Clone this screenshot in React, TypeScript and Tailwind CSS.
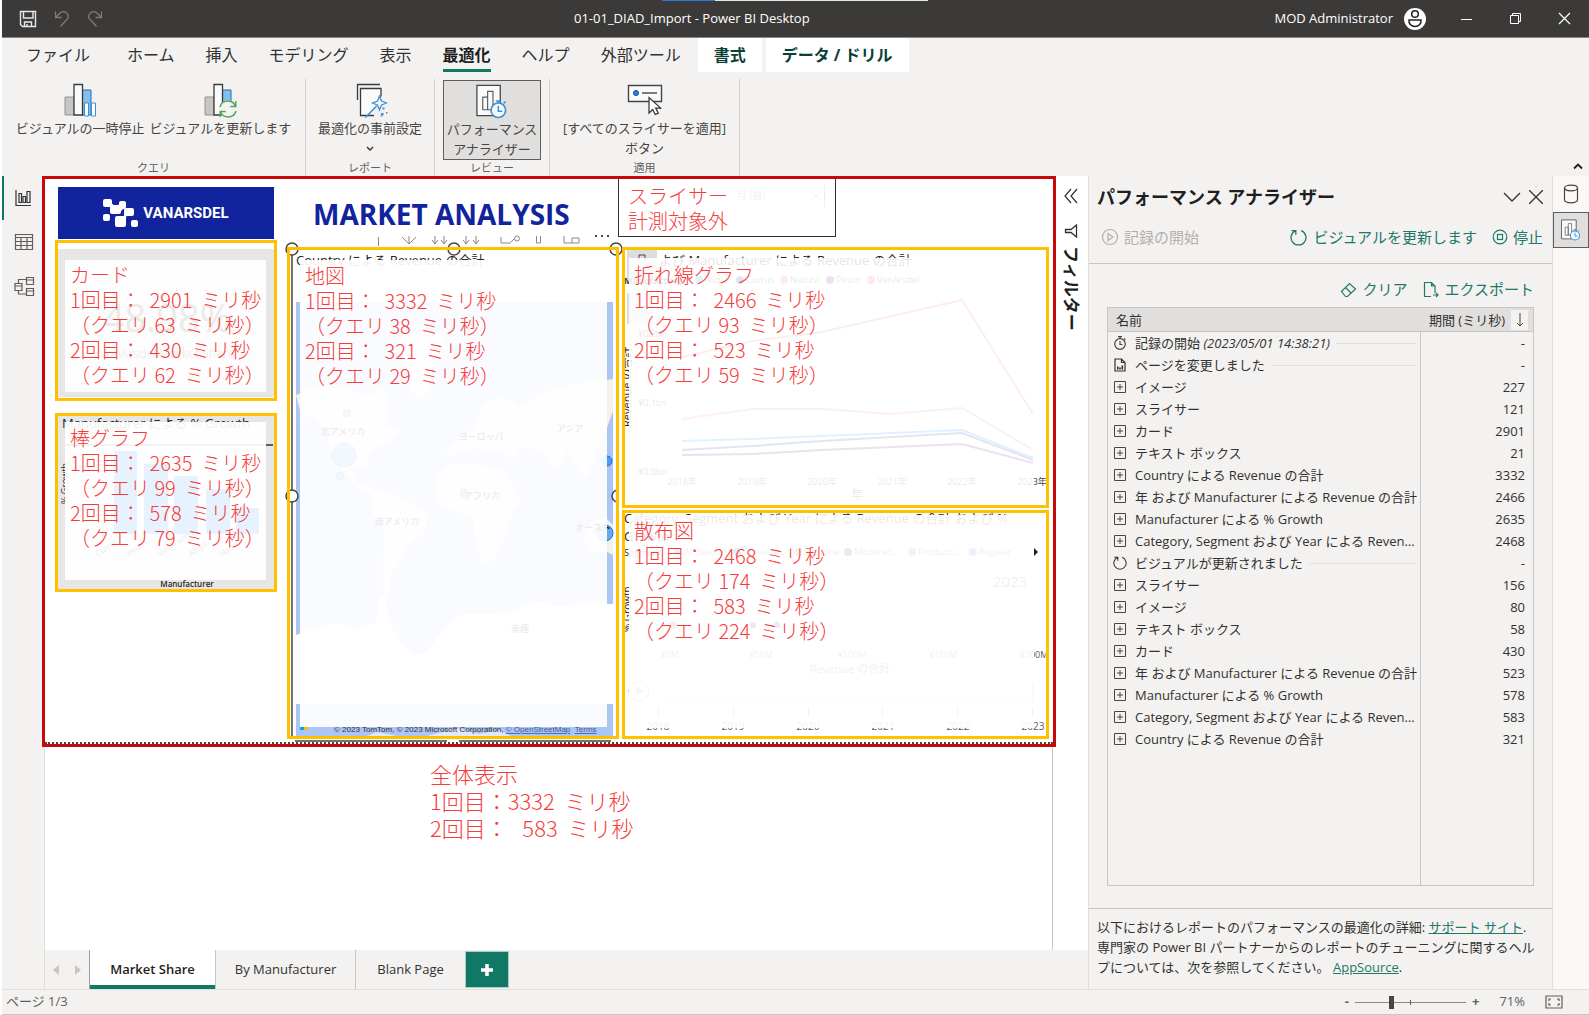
import { useState } from 'react';
import type { ReactNode } from 'react';

type Row = { name: string; stamp?: string; ms: string; kind: 'visual' | 'start' | 'page' | 'refresh' };

const ROWS: Row[] = [
  { name: '記録の開始', stamp: '(2023/05/01 14:38:21)', ms: '-', kind: 'start' },
  { name: 'ページを変更しました', ms: '-', kind: 'page' },
  { name: 'イメージ', ms: '227', kind: 'visual' },
  { name: 'スライサー', ms: '121', kind: 'visual' },
  { name: 'カード', ms: '2901', kind: 'visual' },
  { name: 'テキスト ボックス', ms: '21', kind: 'visual' },
  { name: 'Country による Revenue の合計', ms: '3332', kind: 'visual' },
  { name: '年 および Manufacturer による Revenue の合計', ms: '2466', kind: 'visual' },
  { name: 'Manufacturer による % Growth', ms: '2635', kind: 'visual' },
  { name: 'Category, Segment および Year による Revenue の合計', ms: '2468', kind: 'visual' },
  { name: 'ビジュアルが更新されました', ms: '-', kind: 'refresh' },
  { name: 'スライサー', ms: '156', kind: 'visual' },
  { name: 'イメージ', ms: '80', kind: 'visual' },
  { name: 'テキスト ボックス', ms: '58', kind: 'visual' },
  { name: 'カード', ms: '430', kind: 'visual' },
  { name: '年 および Manufacturer による Revenue の合計', ms: '523', kind: 'visual' },
  { name: 'Manufacturer による % Growth', ms: '578', kind: 'visual' },
  { name: 'Category, Segment および Year による Revenue の合計', ms: '583', kind: 'visual' },
  { name: 'Country による Revenue の合計', ms: '321', kind: 'visual' },
];

const MENU = ['ファイル', 'ホーム', '挿入', 'モデリング', '表示', '最適化', 'ヘルプ', '外部ツール'];
const YEARS = ['2018', '2019', '2020', '2021', '2022', '2023'];

export default function App() {
  return (
    <div className="flex min-h-screen flex-col bg-white pl-0.5 font-['Open_Sans','Noto_Sans_CJK_JP',sans-serif] text-[#323130]">
      <TitleBar />
      <MenuTabs />
      <Ribbon />
      <div className="flex flex-1">
        <ViewNav />
        <div className="flex min-w-0 flex-1 flex-col">
          <div className="flex flex-1">
            <main className="min-w-0 flex-1 bg-white">
              <Report />
              <p className="mt-[13px] ml-[385px] text-[22px] leading-[27px] font-light text-[#f53b3b] font-['Noto_Sans_CJK_JP',sans-serif]">
                全体表示
                <br />
                1回目：3332&nbsp; ミリ秒
                <br />
                2回目：&nbsp;&nbsp; 583&nbsp; ミリ秒
              </p>
            </main>
            <FilterPane />
          </div>
          <PageTabs />
        </div>
        <AnalyzerPane />
        <RightStrip />
      </div>
      <StatusBar />
    </div>
  );
}

function TitleBar() {
  return (
    <header className="relative flex h-[38px] items-center border-b border-[#8a8886] bg-[#3b3a39] text-white">
      <div className="flex w-[572px] items-center gap-[15px] pl-4">
        <button aria-label="保存">
          <svg width="20" height="20" viewBox="0 0 20 20" fill="none" stroke="#e8e8e8" strokeWidth="1.4">
            <path d="M2.5 2.5h15v15h-13l-2-2zM5.5 2.5v6.5h9.5v-6.5M6.5 17.5v-4.5h7v4.5M9 17.5v-2.5" />
          </svg>
        </button>
        <button aria-label="元に戻す">
          <svg width="18" height="18" viewBox="0 0 18 18" fill="none" stroke="#7d7c7b" strokeWidth="1.3">
            <path d="M2.5 1.5v6h6M2.7 7.3L7 3c2.5-2 5.5-1.5 7 .3 1.7 2 1.5 4.7-.3 6.5L7.5 16.5" />
          </svg>
        </button>
        <button aria-label="やり直し">
          <svg width="18" height="18" viewBox="0 0 18 18" fill="none" stroke="#7d7c7b" strokeWidth="1.3">
            <path d="M15.5 1.5v6h-6M15.3 7.3L11 3C8.500 1 5.500 1.500 4 3.300c-1.700 2-1.500 4.700.3 6.500l6.200 6.700" />
          </svg>
        </button>
      </div>
      <div className="absolute top-0 left-[660px] flex h-px w-[266px]">
        <span className="w-[53px] bg-[#2b7cd3]" />
        <span className="flex-1 bg-[#e1e6e1]" />
      </div>
      <span className="flex-1 text-[13px]">01-01_DIAD_Import - Power BI Desktop</span>
      <div className="flex items-center justify-end pr-[18px]">
        <span className="text-[13px]">MOD Administrator</span>
        <svg className="ml-[11px]" width="22" height="22" viewBox="0 0 22 22">
          <circle cx="11" cy="11" r="11" fill="#fff" />
          <circle cx="11" cy="6" r="3.3" fill="none" stroke="#222" strokeWidth="1.5" />
          <path d="M5 12h12c.5 3.5-2 6.5-6 6.5S4.5 15.5 5 12z" fill="none" stroke="#222" strokeWidth="1.5" />
        </svg>
        <button aria-label="最小化" className="ml-[34px]">
          <svg width="13" height="13" viewBox="0 0 13 13" stroke="#fff"><path d="M1 7.5h11" /></svg>
        </button>
        <button aria-label="元のサイズに戻す" className="ml-9">
          <svg width="13" height="13" viewBox="0 0 13 13" fill="none" stroke="#fff">
            <path d="M1.5 3.5h8v8h-8zM3.5 3.5v-2h8v8h-2" />
          </svg>
        </button>
        <button aria-label="閉じる" className="ml-9">
          <svg width="13" height="13" viewBox="0 0 13 13" stroke="#fff" strokeWidth="1.2"><path d="M1 1l11 11M12 1L1 12" /></svg>
        </button>
      </div>
    </header>
  );
}

function MenuTabs() {
  return (
    <nav className="flex h-[34px] items-stretch bg-[#f3f2f1] pl-2 text-[16px] leading-[34px]">
      {MENU.map((m) => (
        <button key={m} className={m === 'ファイル' ? 'mr-1.5 pr-[15px] pl-4' : m === '最適化' ? 'pr-[15px] pl-4 font-bold text-[#201f1e]' : 'pr-[15px] pl-4'}>
          <span className={m === '最適化' ? 'block h-[34px] border-b-[3px] border-[#117865]' : 'block h-[34px]'}>{m}</span>
        </button>
      ))}
      <button className="ml-0.5 bg-white px-4 font-bold text-[#0b3f37]">書式</button>
      <button className="ml-1 bg-white px-4 font-bold text-[#0b3f37]">データ / ドリル</button>
    </nav>
  );
}

function BarsIcon({ children }: { children: ReactNode }) {
  return (
    <svg width="36" height="36" viewBox="0 0 36 36" fill="none">
      <path d="M3 14h9v18H3z" fill="#c8c6c4" stroke="#979593" />
      <path d="M20 7h9v25h-9z" fill="#83beec" stroke="#1e6fc0" />
      <path d="M12 1.5h8.5V32H12z" fill="#fafafa" stroke="#3b3a39" strokeWidth="1.3" />
      {children}
    </svg>
  );
}

function RefreshArrows() {
  return (
    <g stroke="#4ba35c" strokeWidth="1.4">
      <circle cx="26" cy="26" r="9" fill="#f3f2f1" stroke="none" />
      <path d="M18 24c1-4 4-6 8-6 3.5 0 6 2 7.5 5M33.8 18v5.5h-5.5M34 28c-1 4-4 6-8 6-3.5 0-6-2-7.5-5M18.2 34v-5.5h5.5" />
    </g>
  );
}

function AnalyzerIcon({ size }: { size: number }) {
  return (
    <svg width={size} height={size} viewBox="0 0 36 36" fill="none">
      <path d="M2.5 1.5h24v31h-24z" fill="#fafafa" stroke="#484644" strokeWidth="1.3" />
      <path d="M8.5 13.5h5v13h-5zM13.5 7.5h5.5v19h-5.5z" stroke="#605e5c" strokeWidth="1.2" />
      <circle cx="24.5" cy="27" r="7.5" fill="#f3f9fd" stroke="#3f8fd2" strokeWidth="1.7" />
      <path d="M24.5 22.5V28h4M22 17.5h5M24.5 17.5v2M30 20l2-2" stroke="#3f8fd2" strokeWidth="1.5" />
    </svg>
  );
}

function Ribbon() {
  return (
    <section className="relative flex h-[104px] bg-[#f3f2f1] pt-[7px] text-[13px] leading-5 text-[#484644]">
      <Group label="クエリ" className="w-[304px]">
        <div className="flex justify-center gap-[5px]">
          <RibbonButton icon={<BarsIcon><path d="M22.5 20h4v13h-4zM29.5 20h4v13h-4z" fill="#fff" stroke="#3f8fd2" /></BarsIcon>}>
            ビジュアルの一時停止
          </RibbonButton>
          <RibbonButton icon={<BarsIcon><RefreshArrows /></BarsIcon>}>ビジュアルを更新します</RibbonButton>
        </div>
      </Group>
      <Group label="レポート" className="w-[129px]">
        <RibbonButton
          icon={
            <svg width="36" height="36" viewBox="0 0 36 36" fill="none" stroke="#3b3a39" strokeWidth="1.3">
              <path d="M5.5 17V1.5H28" />
              <path d="M8.5 5.5H29V32.5H8.5z" fill="#fafafa" />
              <path d="M22 21l9-9 4 10-7 12h-6z" fill="#f3f2f1" stroke="none" />
              <path d="M27.5 13l2 5 5 2-5 2-2 5-2-5-5-2 5-2z" fill="#f3f9fd" stroke="#3f8fd2" />
              <path d="M13.5 34.5l11-11.5" stroke="#3f8fd2" strokeWidth="1.6" />
              <path d="M30.5 24.5h2v2h-2zM29 30h2.5v2.5H29zM34 29h1.500v1.500H34z" fill="#3f8fd2" stroke="none" />
            </svg>
          }
        >
          最適化の事前設定
          <svg className="mx-auto mt-2" width="8" height="6" viewBox="0 0 8 6" fill="none" stroke="#323130" strokeWidth="1.4">
            <path d="M1 1l3 3 3-3" />
          </svg>
        </RibbonButton>
      </Group>
      <Group label="レビュー" className="w-[115px]">
        <button className="mx-auto mt-px flex h-20 w-[98px] flex-col items-center border border-[#605e5c] bg-[#e1dfdd] pt-[3px]">
          <AnalyzerIcon size={36} />
          <span className="whitespace-nowrap">
            パフォーマンス
            <br />
            アナライザー
          </span>
        </button>
      </Group>
      <Group label="適用" className="w-[190px]">
        <RibbonButton
          icon={
            <svg width="36" height="36" viewBox="0 0 36 36" fill="none">
              <path d="M1.5 2.5h33v16h-33z" fill="#fafafa" stroke="#484644" strokeWidth="1.4" />
              <circle cx="9" cy="10" r="2.6" fill="#2b7cd3" stroke="#1a5ea8" />
              <path d="M15 10h15" stroke="#484644" strokeWidth="1.4" />
              <path d="M22 14.5V30l3.7-3.5 2.6 5 3-1.4-2.6-5h5z" fill="#fafafa" stroke="#323130" strokeWidth="1.2" />
            </svg>
          }
        >
          [すべてのスライサーを適用]
          <br />
          ボタン
        </RibbonButton>
      </Group>
      <button aria-label="リボンを折りたたむ" className="absolute right-1.5 bottom-1.5">
        <svg width="10" height="8" viewBox="0 0 10 8" fill="none" stroke="#201f1e" strokeWidth="1.8"><path d="M1 6.5l4-4 4 4" /></svg>
      </button>
    </section>
  );
}

function Group({ label, className, children }: { label: string; className: string; children: ReactNode }) {
  return (
    <div className={`flex flex-col justify-between border-r border-[#d2d0ce] ${className}`}>
      {children}
      <span className="text-center text-[11px] leading-4 text-[#605e5c]">{label}</span>
    </div>
  );
}

function RibbonButton({ icon, children }: { icon: ReactNode; children: ReactNode }) {
  return (
    <button className="flex flex-col items-center pt-1 whitespace-nowrap">
      {icon}
      <span className="-mt-px">{children}</span>
    </button>
  );
}

function ViewNav() {
  return (
    <nav className="flex w-[43px] flex-col border-r border-[#e1dfdd] bg-[#f3f2f1] text-[#605e5c]">
      <button aria-label="レポート ビュー" className="flex h-11 items-center border-l-2 border-[#117865] pl-2.5">
        <svg width="18" height="18" viewBox="0 0 18 18" fill="none" stroke="#323130" strokeWidth="1.2">
          <path d="M2 1v15.5h15M5 4.5h2.5v9H5zM9 7.5h2.5v6H9zM13 2.5h3v11h-3z" />
        </svg>
      </button>
      <button aria-label="データ ビュー" className="flex h-11 items-center pl-3">
        <svg width="20" height="18" viewBox="0 0 20 18" fill="none" stroke="currentColor" strokeWidth="1.2">
          <path d="M1.5 1.5h17v15h-17zM1.5 4.5h17M1.5 8.5h17M1.5 12.5h17M7 4.5v12M13 4.5v12" />
        </svg>
      </button>
      <button aria-label="モデル ビュー" className="flex h-11 items-center pl-3">
        <svg width="21" height="21" viewBox="0 0 21 21" fill="none" stroke="currentColor" strokeWidth="1.2">
          <path d="M12.5 1.5h7v7h-7zM12.5 4h7M12.5 12.5h7v7h-7zM12.5 15h7M1 7.5h7v7H1zM1 10h7M4.5 7.5v-4h8M4.5 14.5v3.5h8" />
        </svg>
      </button>
    </nav>
  );
}

function Report() {
  return (
    <section className="relative z-10 -mr-1 -ml-[3px] flex h-[571px] border-[3px] border-[#c8090c] bg-white pr-1 pl-2.5">
      <div className="absolute inset-x-0 bottom-0 border-b-2 border-dotted border-[#484644]" />
      <div className="flex w-[222px] shrink-0 flex-col">
        <div className="mx-[3px] mt-2 mb-px flex h-[52px] items-center justify-center gap-1 bg-[#12239e] text-white">
          <svg width="36" height="30" viewBox="0 0 36 30" fill="#fff">
            <rect x="0" y="1" width="9" height="8" rx="2" />
            <rect x="7" y="7" width="11" height="9" rx="2" />
            <rect x="16" y="3" width="7" height="8" rx="2" />
            <rect x="0" y="16" width="7" height="7" rx="2" />
            <rect x="21" y="10" width="10" height="8" rx="2" />
            <rect x="12" y="18" width="11" height="11" rx="2" />
            <rect x="28" y="22" width="7" height="7" rx="2" />
            <path d="M7 6l3 0 1 3h-4zM15 7l3-2 3 5-3 3zM21 16l3 0-1 4h-2z" />
          </svg>
          <span className="text-[15px] font-bold font-['Roboto',sans-serif]">VANARSDEL</span>
        </div>
        <Note className="h-[161px]" pad="pt-[19px] pl-3" title="カード" first="2901" q1="63" second="430" q2="62">
          <CardArt />
        </Note>
        <Note className="mt-3 h-[179px]" pad="pt-[9px] pl-3" title="棒グラフ" first="2635" q1="99" second="578" q2="79">
          <BarArt />
        </Note>
      </div>
      <div className="ml-2.5 flex w-[332px] shrink-0 flex-col">
        <h1 className="mt-[15px] pl-[26px] text-[28px] leading-10 font-bold text-[#12239e]">MARKET ANALYSIS</h1>
        <svg className="mb-px ml-[88px]" width="240" height="12" viewBox="0 0 240 12" fill="none" stroke="#8a8886">
          <path d="M3.5 3v9M27 3l7 7 7-7M34 2v8M57 6l3 4 3-4M60 2v8M66 6l3 4 3-4M69 2v8M88 6l3 4 3-4M91 2v8M98 6l3 4 3-4M101 2v8M126 3v6h10M136 8l4-4M161.5 2v7h4v-7M189 2v7h15v-5h-7v5" />
          <circle cx="142" cy="4.5" r="2.5" />
          <path d="M220 2h2M226 2h2M232 2h2" stroke="#484644" strokeWidth="2" />
        </svg>
        <Note className="h-[492px]" pad="pt-[13px] pl-[15px]" title="地図" first="3332" q1="38" second="321" q2="29">
          <MapArt />
        </Note>
      </div>
      <div className="ml-[3px] flex min-w-0 flex-1 flex-col">
        <div className="relative -ml-1 h-[58px] w-[218px] border border-t-0 border-[#323130] pt-1 pl-[9px] text-[20px] leading-[25px] font-light text-[#f53b3b] font-['Noto_Sans_CJK_JP',sans-serif]">
          スライサー
          <br />
          計測対象外
          <svg className="absolute top-1.5 right-2" width="90" height="26" viewBox="0 0 90 26" fill="none" stroke="#ededed">
            <text x="0" y="14" fontSize="10" fill="#ededed" stroke="none">月 (暦)</text>
            <path d="M76 8l3 4 3-4M87.5 0v22" />
          </svg>
        </div>
        <Note className="mt-2.5 h-[261px]" pad="pt-3 pl-[9px]" title="折れ線グラフ" first="2466" q1="93" second="523" q2="59">
          <LineArt />
        </Note>
        <Note className="mt-0.5 h-[229px]" pad="pt-[5px] pl-[9px]" title="散布図" first="2468" q1="174" second="583" q2="224">
          <ScatterArt />
        </Note>
      </div>
    </section>
  );
}

type NoteProps = {
  className: string;
  pad: string;
  title: string;
  first: string;
  q1: string;
  second: string;
  q2: string;
  children: ReactNode;
};

function Note({ className, pad, title, first, q1, second, q2, children }: NoteProps) {
  return (
    <div className={`relative ${className}`}>
      {children}
      <p className={`relative h-full border-[3px] border-[#ffc000] text-[20px] leading-[25px] font-light whitespace-nowrap text-[#f53b3b] font-['Noto_Sans_CJK_JP',sans-serif] ${pad}`}>
        {title}
        <br />
        1回目：&nbsp; {first}&nbsp; ミリ秒
        <br />
        （クエリ {q1}&nbsp; ミリ秒）
        <br />
        2回目：&nbsp; {second}&nbsp; ミリ秒
        <br />
        （クエリ {q2}&nbsp; ミリ秒）
      </p>
    </div>
  );
}

function CardArt() {
  return (
    <svg className="absolute top-0 left-0" width="222" height="161" viewBox="0 0 222 161" textAnchor="middle">
      <rect x="3" y="9" width="217" height="148" fill="#e6e6e6" />
      <rect x="10" y="20" width="201" height="132" fill="#fdfdfd" />
      <text x="112" y="92" fontSize="38" fill="#ebebeb">48.98%</text>
      <text x="112" y="118" fontSize="12" fill="#f0f0f0">VanArsdel Market Share</text>
    </svg>
  );
}

function BarArt() {
  return (
    <svg className="absolute top-0 left-0" width="222" height="179" viewBox="0 0 222 179">
      <rect x="2" y="2" width="218" height="175" fill="#e6e6e6" />
      <text x="7" y="15" fontSize="13" fill="#252423">Manufacturer による % Growth</text>
      <path d="M10 32h208" stroke="#605e5c" strokeWidth="2" />
      <text transform="translate(13 91) rotate(-90)" fontSize="9" fill="#252423">% Growth</text>
      <rect x="10" y="9" width="201" height="158" fill="#fff" fillOpacity=".93" />
      <path d="M59 38h23v83h-23zM89 51h24v70h-24zM119 63h24v58h-24zM151 76h24v45h-24zM181 95h23v26h-23z" fill="#e6f2fd" />
      {['Currus', 'Pirum', 'VanArsdel', 'Aliqui', 'Natura'].map((n, i) => (
        <text key={n} transform={`translate(${43 + i * 31} ${144}) rotate(-35)`} fontSize="8" fill="#ececec">{n}</text>
      ))}
      <text x="132" y="174" fontSize="8" fontWeight="600" textAnchor="middle" fill="#252423">Manufacturer</text>
    </svg>
  );
}

function MapArt() {
  return (
    <svg className="absolute top-0 left-0 overflow-visible" width="332" height="492" viewBox="0 0 332 492">
      <path d="M5 6v486M8 494h152M172 494h152" stroke="#484644" strokeWidth="1.5" />
      <g fill="#fff" stroke="#484644" strokeWidth="1.5">
        <circle cx="5" cy="2" r="6" />
        <circle cx="167" cy="2" r="6" />
        <circle cx="329" cy="2" r="6" />
      </g>
      <text x="9" y="18" fontSize="13" fill="#252423">Country による Revenue の合計</text>
      <rect x="9" y="55" width="317" height="434" fill="#abc5f5" />
      <g fill="#f4f1ea">
        <path d="M9 148l22-8 30 3 22 6 12-10 8 20-6 18 16 6-10 10-16 10-10 16-6 2-8-2 6 16 10 2 12 8-6 2-16-8-14-16-12-24-6-20-12-10-10 3z" />
        <path d="M112 92l20-8 22 4 6 12-10 14-4 22-12 18-10-10-4-22-10-16z" />
        <path d="M84 243l16 0 22 12 20 12-6 20-16 12-8 18-8 8-2 22-6-2 0-34 2-26-12-16z" />
        <path d="M158 210l8-14 22-16 8-24 20-6 18 12 20-16 30-8 42-6v32l-10 28-8 16-8 24-12-14-8-14-12 20-10-16-20-10-12 14-16-8-24-2z" />
        <path d="M150 230l14-13 26 0 30 8 12 24 2 6-14 20-4 22-10 16-10 4-8-22-2-22-14-8-18-4-6-14z" />
        <path d="M296 290l8-14 14-6 8 8v30l-8-4-14 2z" />
      </g>
      <path d="M9 388l12-4 28-8 20 6 20-6 4-26 6-4 2 26 12 24 14 12 12-2 16-22 16-16 48-2 20-8 16-4 14 6 25-4L326 357V457H9z" fill="#fff" />
      <g fill="#2b88f0" fillOpacity=".7" stroke="#1a6fd6">
        <circle cx="57" cy="208" r="12" />
        <circle cx="60" cy="166" r="4" />
        <circle cx="53" cy="229" r="4" />
        <circle cx="177" cy="246" r="4" />
        <circle cx="318" cy="286" r="8" />
        <circle cx="320" cy="214" r="5" />
      </g>
      <g fontSize="9" fontWeight="600" fill="#101010" textAnchor="middle">
        <text x="56" y="188">北アメリカ</text>
        <text x="194" y="193">ヨーロッパ</text>
        <text x="283" y="185">アジア</text>
        <text x="195" y="252">アフリカ</text>
        <text x="110" y="278">南アメリカ</text>
        <text x="306" y="284">オースト</text>
        <text x="233" y="385">南極</text>
      </g>
      <path d="M140 489l30-8 22 6 20-4 12 6zM80 489l10-4 20 4z" fill="#dfe8fa" />
      <path d="M13 480h4v3h-4z" fill="#00a4ef" />
      <path d="M17 480h4v3h-4z" fill="#ffb900" />
      <text x="47" y="485" fontSize="8" fill="#323130" fontFamily="Liberation Sans">
        © 2023 TomTom, © 2023 Microsoft Corporation, <tspan fill="#3b5a92" textDecoration="underline">© OpenStreetMap</tspan> &#160;
        <tspan fill="#3b5a92" textDecoration="underline">Terms</tspan>
      </text>
      <rect x="13" y="13" width="307" height="467" fill="#fff" fillOpacity=".92" />
      <circle cx="5" cy="249" r="6" fill="#fff" stroke="#484644" strokeWidth="1.5" />
      <path d="M331 243a6 6 0 0 0 0 12" fill="#fff" stroke="#484644" strokeWidth="1.5" />
    </svg>
  );
}

const SERIES = [
  { color: '#e66c7d', points: '60,110 130,94 200,85 270,69 340,53 411,167' },
  { color: '#f08a5b', points: '60,172 130,162 200,162 270,167 340,161 411,203' },
  { color: '#118dff', points: '60,194 130,192 200,189 270,186 340,183 411,211' },
  { color: '#12239e', points: '60,203 130,199 200,194 270,190 340,186 411,213' },
  { color: '#6b007b', points: '60,208 130,207 200,203 270,200 340,197 411,216' },
];

const LINE_LEGEND = [
  { x: 77, name: 'Aliqui', color: '#118dff' },
  { x: 118, name: 'Currus', color: '#12239e' },
  { x: 162, name: 'Natura', color: '#e66c37' },
  { x: 208, name: 'Pirum', color: '#6b007b' },
  { x: 249, name: 'VanArsdel', color: '#e044a7' },
];

function LineArt() {
  return (
    <svg className="absolute top-0 left-0" width="427" height="261" viewBox="0 0 427 261" fontSize="9" fill="#484644">
      <rect x="5" y="3" width="30" height="34" fill="#dddddd" />
      <rect x="5" y="46" width="26" height="31" fill="#dddddd" />
      <text x="37" y="18" fontSize="13" fill="#252423">よび Manufacturer による Revenue の合計</text>
      <path d="M17 14v-6h6v6" fill="none" stroke="#484644" />
      <text x="2" y="37" fontWeight="700">Manufacturer</text>
      {LINE_LEGEND.map((l) => (
        <g key={l.name}>
          <circle cx={l.x} cy="33" r="4" fill={l.color} />
          <text x={l.x + 6} y="36">{l.name}</text>
        </g>
      ))}
      <text transform="translate(9 180) rotate(-90)" fontSize="11" fill="#252423">Revenue の合計</text>
      <text x="16" y="90">¥0.2bn</text>
      <text x="16" y="159">¥0.1bn</text>
      <text x="16" y="228">¥0.0bn</text>
      {SERIES.map((s) => (
        <polyline key={s.color} points={s.points} fill="none" stroke={s.color} strokeWidth="2" />
      ))}
      {YEARS.map((y, i) => (
        <text key={y} x={60 + i * 70} y="238" textAnchor="middle">{y}年</text>
      ))}
      <text x="235" y="252" fontSize="12" textAnchor="middle">年</text>
      <rect x="7" y="11" width="405" height="246" fill="#fff" fillOpacity=".88" />
    </svg>
  );
}

const SCATTER_LEGEND = [
  { x: 56, name: 'All Season', color: '#118dff' },
  { x: 115, name: 'Conveni...', color: '#12239e' },
  { x: 176, name: 'Extreme', color: '#e66c37' },
  { x: 226, name: 'Moderati...', color: '#6b007b' },
  { x: 290, name: 'Producti...', color: '#e044a7' },
  { x: 351, name: 'Regular', color: '#744ec2' },
];

function ScatterArt() {
  return (
    <svg className="absolute top-0 left-0" width="427" height="229" viewBox="0 0 427 229" fontSize="9" fill="#605e5c">
      <text x="2" y="13" fontSize="13" fill="#252423">Category, Segment および Year による Revenue の合計 および %</text>
      <text x="2" y="31" fontSize="13" fill="#252423">Growth</text>
      <text x="2" y="46" fill="#252423">Segment</text>
      {SCATTER_LEGEND.map((l) => (
        <g key={l.name}>
          <circle cx={l.x} cy="42" r="4" fill={l.color} />
          <text x={l.x + 6} y="45">{l.name}</text>
        </g>
      ))}
      <text transform="translate(9 122) rotate(-90)" fontSize="10" fill="#252423">% Growth</text>
      <text x="388" y="77" fontSize="15" textAnchor="middle">2023</text>
      <circle cx="51" cy="115" r="4" fill="#e66c37" />
      <circle cx="131" cy="115" r="3" fill="#6b007b" />
      <circle cx="155" cy="115" r="3" fill="#12239e" />
      {['¥0M', '¥50M', '¥100M', '¥150M', '¥200M'].map((t, i) => (
        <text key={t} x={48 + i * 91} y="148" textAnchor="middle">{t}</text>
      ))}
      <text x="228" y="163" fontSize="11" textAnchor="middle">Revenue の合計</text>
      <circle cx="17" cy="181" r="10" fill="none" stroke="#a19f9d" />
      <path d="M14 176l8 5-8 5z" fill="#a19f9d" />
      <path d="M36.5 197v10M111.5 197v10M186.5 197v10M260.5 197v10M335.5 197v10M410.5 197v10M411 172v21" stroke="#8a8886" />
      <path d="M36 190.5h375" stroke="#e1dfdd" />
      {YEARS.map((y, i) => (
        <text key={y} x={36 + i * 75} y="220" fontSize="10" textAnchor="middle">{y}</text>
      ))}
      <rect x="7" y="5" width="405" height="213" fill="#fff" fillOpacity=".9" />
      <path d="M412 38l4 4-4 4z" fill="#201f1e" />
    </svg>
  );
}

function FilterPane() {
  return (
    <aside className="flex w-[36px] flex-col items-center border-l border-[#c8c6c4] bg-white pt-3">
      <button aria-label="フィルターを展開">
        <svg width="16" height="16" viewBox="0 0 16 16" fill="none" stroke="#323130" strokeWidth="1.2">
          <path d="M8 1L2 8l6 7M14 1L8 8l6 7" />
        </svg>
      </button>
      <svg className="mt-5" width="14" height="14" viewBox="0 0 14 14" fill="none" stroke="#323130" strokeWidth="1.3">
        <path d="M12.5 1v12L7 8.5H1.5v-3H7z" />
      </svg>
      <span className="mt-2 text-[17px] leading-5 font-bold text-[#201f1e] [text-orientation:sideways] [writing-mode:vertical-rl]">フィルター</span>
    </aside>
  );
}

function PageTabs() {
  return (
    <div className="flex h-[39px] items-stretch bg-[#f3f2f1] text-[13px]">
      <div className="flex w-[45px] items-center justify-around border-r border-[#a19f9d] text-[#c8c6c4]">
        <button aria-label="前のページ">
          <svg width="6" height="10" viewBox="0 0 6 10" fill="currentColor"><path d="M6 0v10L0 5z" /></svg>
        </button>
        <button aria-label="次のページ">
          <svg width="6" height="10" viewBox="0 0 6 10" fill="currentColor"><path d="M0 0v10l6-5z" /></svg>
        </button>
      </div>
      <button className="w-[125px] border-b-4 border-[#117865] bg-white pt-1 font-semibold text-[#201f1e]">Market Share</button>
      <button className="w-[141px] border-r border-l border-[#c8c6c4]">By Manufacturer</button>
      <button className="w-[109px]">Blank Page</button>
      <button aria-label="新しいページ" className="my-px flex w-11 items-center justify-center border border-[#a7cdc5] bg-[#117865]">
        <svg width="14" height="14" viewBox="0 0 14 14" stroke="#fff" strokeWidth="3.5"><path d="M7 1v12M1 7h12" /></svg>
      </button>
    </div>
  );
}

function RowIcon({ kind }: { kind: Row['kind'] }) {
  if (kind === 'start') {
    return (
      <svg width="14" height="14" viewBox="0 0 14 14" fill="none" stroke="#484644" strokeWidth="1.2">
        <circle cx="7" cy="8" r="5.3" />
        <path d="M7 5v3.5h2.5M5 .7h4M7 .7v2M11 2.5l1.3 1.3" />
      </svg>
    );
  }
  if (kind === 'page') {
    return (
      <svg width="14" height="14" viewBox="0 0 14 14" fill="none" stroke="#323130" strokeWidth="1.2">
        <path d="M2 1h6.5L12 4.5V13H2zM8.5 1v3.5H12" />
        <path d="M4.8 11.5v-3M7 11.5v-2M9.3 11.5v-4" strokeWidth="1.6" />
      </svg>
    );
  }
  if (kind === 'refresh') return <RefreshIcon size={14} />;
  return (
    <button aria-label="展開">
      <svg width="14" height="14" viewBox="0 0 14 14" fill="none" stroke="#484644">
        <path d="M1.5 1.5h11v11h-11zM7 4v6M4 7h6" />
      </svg>
    </button>
  );
}

function RefreshIcon({ size }: { size: number }) {
  return (
    <svg className="shrink-0" width={size} height={size} viewBox="0 0 16 16" fill="none" stroke="currentColor" strokeWidth="1.2">
      <path d="M5.5 1.5A7 7 0 1 0 10.5 1.5M1.5 1.5h4v4" />
    </svg>
  );
}

function AnalyzerPane() {
  const [open, setOpen] = useState(true);

  return (
    <aside className="flex w-[465px] shrink-0 flex-col border-x border-[#e1dfdd] bg-[#f3f2f1]">
      <div className="flex h-[46px] items-center pr-[9px] pb-1 pl-2">
        <h2 className="flex-1 text-[18px] font-bold text-[#201f1e]">パフォーマンス アナライザー</h2>
        <button aria-label="折りたたむ" onClick={() => setOpen(!open)}>
          <svg width="18" height="10" viewBox="0 0 18 10" fill="none" stroke="#323130" strokeWidth="1.3"><path d="M1 1l8 8 8-8" /></svg>
        </button>
        <button aria-label="閉じる" className="ml-2">
          <svg width="14" height="14" viewBox="0 0 14 14" stroke="#323130" strokeWidth="1.3"><path d="M0 0l14 14M14 0L0 14" /></svg>
        </button>
      </div>
      <div className="flex h-[42px] items-start border-b border-[#c8c6c4] pt-1 pr-[9px] pl-3 text-[15px] text-[#217868]">
        <button className="flex items-center gap-[5px] text-[#b3b0ad]" disabled>
          <svg width="18" height="18" viewBox="0 0 18 18" fill="none" stroke="currentColor" strokeWidth="1.2">
            <circle cx="9" cy="9" r="7.5" />
            <path d="M7 5.5l5 3.5-5 3.5z" />
          </svg>
          記録の開始
        </button>
        <button className="ml-auto flex items-center gap-1.5">
          <RefreshIcon size={17} />
          ビジュアルを更新します
        </button>
        <button className="ml-[15px] flex items-center gap-[5px]">
          <svg width="16" height="16" viewBox="0 0 16 16" fill="none" stroke="currentColor" strokeWidth="1.2">
            <circle cx="8" cy="8" r="6.8" />
            <rect x="5.5" y="5.5" width="5" height="5" />
          </svg>
          停止
        </button>
      </div>
      <div className="flex h-[43px] items-center justify-end gap-4 pt-2 pr-[18px] text-[15px] text-[#217868]">
        <button className="flex items-center gap-[5px]">
          <svg width="17" height="16" viewBox="0 0 17 16" fill="none" stroke="currentColor" strokeWidth="1.2">
            <path d="M1.5 9.5L9.5 1.5l6 5.5-8 7.5H5.5zM5.5 5.5l6 6" />
          </svg>
          クリア
        </button>
        <button className="flex items-center gap-[5px]">
          <svg width="16" height="17" viewBox="0 0 16 17" fill="none" stroke="currentColor" strokeWidth="1.2">
            <path d="M8 15.5H1.5V1.5h7L12 5v7M8.5 1.5V5H12M10 14h5M13 12l2 2-2 2" />
          </svg>
          エクスポート
        </button>
      </div>
      {open && <ResultTable />}
      <div className="mt-auto border-t border-[#c8c6c4] pt-2 pb-3 pl-2 text-[13px] leading-5">
        <p>
          以下におけるレポートのパフォーマンスの最適化の詳細: <a href="#" className="text-[#217868] underline">サポート サイト</a>.
        </p>
        <p>
          専門家の Power BI パートナーからのレポートのチューニングに関するヘル
          <br />
          プについては、次を参照してください。 <a href="#" className="text-[#217868] underline">AppSource</a>.
        </p>
      </div>
    </aside>
  );
}

function ResultTable() {
  return (
    <div className="px-[18px]">
      <table className="w-full table-fixed border-collapse border border-[#c8c6c4] text-[13px] leading-[22px]">
        <thead>
          <tr className="h-6 border border-[#c8c6c4] bg-[#e1dfdd]">
            <th className="p-0 pl-2 text-left font-normal">名前</th>
            <th className="w-[113px] p-0 font-normal">
              <span className="flex items-center justify-end gap-1.5 pr-[5px] whitespace-nowrap">
                期間 (ミリ秒)
                <button aria-label="並べ替え" className="flex h-5 w-[17px] items-center justify-center bg-[#f3f2f1]">
                  <svg width="8" height="14" viewBox="0 0 8 14" fill="none" stroke="#484644"><path d="M4 0v13M1 10l3 3 3-3" /></svg>
                </button>
              </span>
            </th>
          </tr>
        </thead>
        <tbody>
          {ROWS.map((r, i) => (
            <tr key={i} className="h-[22px]">
              <td className="border-r border-[#c8c6c4] p-0 pl-[5px]">
                <div className="flex h-[22px] items-center">
                  <span className="flex w-[14px] shrink-0">
                    <RowIcon kind={r.kind} />
                  </span>
                  <span className="ml-2 truncate">
                    {r.name}
                    {r.stamp && <i> {r.stamp}</i>}
                  </span>
                  {r.kind !== 'visual' && <span className="mr-1 ml-1.5 h-px flex-1 bg-[#e1dfdd]" />}
                </div>
              </td>
              <td className="p-0 pr-2 text-right">{r.ms}</td>
            </tr>
          ))}
          <tr className="h-[135px]">
            <td className="border-r border-[#c8c6c4]" />
            <td />
          </tr>
        </tbody>
      </table>
    </div>
  );
}

function RightStrip() {
  return (
    <nav className="flex w-9 flex-col bg-[#faf9f8]">
      <button aria-label="データ" className="flex h-9 items-center justify-center">
        <svg width="16" height="20" viewBox="0 0 16 20" fill="none" stroke="#484644" strokeWidth="1.2">
          <ellipse cx="8" cy="4" rx="6.5" ry="2.8" />
          <path d="M1.5 4v12c0 1.5 3 2.8 6.5 2.8s6.5-1.3 6.5-2.8V4" />
        </svg>
      </button>
      <button aria-label="パフォーマンス アナライザー" className="flex h-9 items-center justify-center border border-[#605e5c] bg-[#e1dfdd]">
        <AnalyzerIcon size={22} />
      </button>
    </nav>
  );
}

function StatusBar() {
  return (
    <footer className="flex h-[26px] items-center border-y border-t-[#e1dfdd] border-b-[#c8c6c4] bg-[#f3f2f1] pr-[26px] pl-1 text-[13px] text-[#605e5c]">
      <span className="flex-1">ページ 1/3</span>
      <button aria-label="縮小" className="font-bold">-</button>
      <span className="relative mx-1.5 flex w-[111px] items-center">
        <input
          type="range"
          aria-label="ズーム"
          min={10}
          max={200}
          defaultValue={71}
          className="h-[13px] w-full appearance-none bg-[linear-gradient(#8a8886,#8a8886)] bg-[length:100%_1px] bg-center bg-no-repeat [&::-webkit-slider-thumb]:h-[13px] [&::-webkit-slider-thumb]:w-[5px] [&::-webkit-slider-thumb]:appearance-none [&::-webkit-slider-thumb]:bg-[#484644]"
        />
        <span className="absolute left-1/2 h-[5px] w-px bg-[#605e5c]" />
      </span>
      <button aria-label="拡大" className="font-bold">+</button>
      <span className="ml-5">71%</span>
      <button aria-label="ページに合わせる" className="ml-5">
        <svg width="18" height="14" viewBox="0 0 18 14" fill="none" stroke="#605e5c" strokeWidth="1.2">
          <path d="M1 1h16v12H1zM4 6V4h2M12 4h2v2M14 8v2h-2M6 10H4V8" />
        </svg>
      </button>
    </footer>
  );
}
